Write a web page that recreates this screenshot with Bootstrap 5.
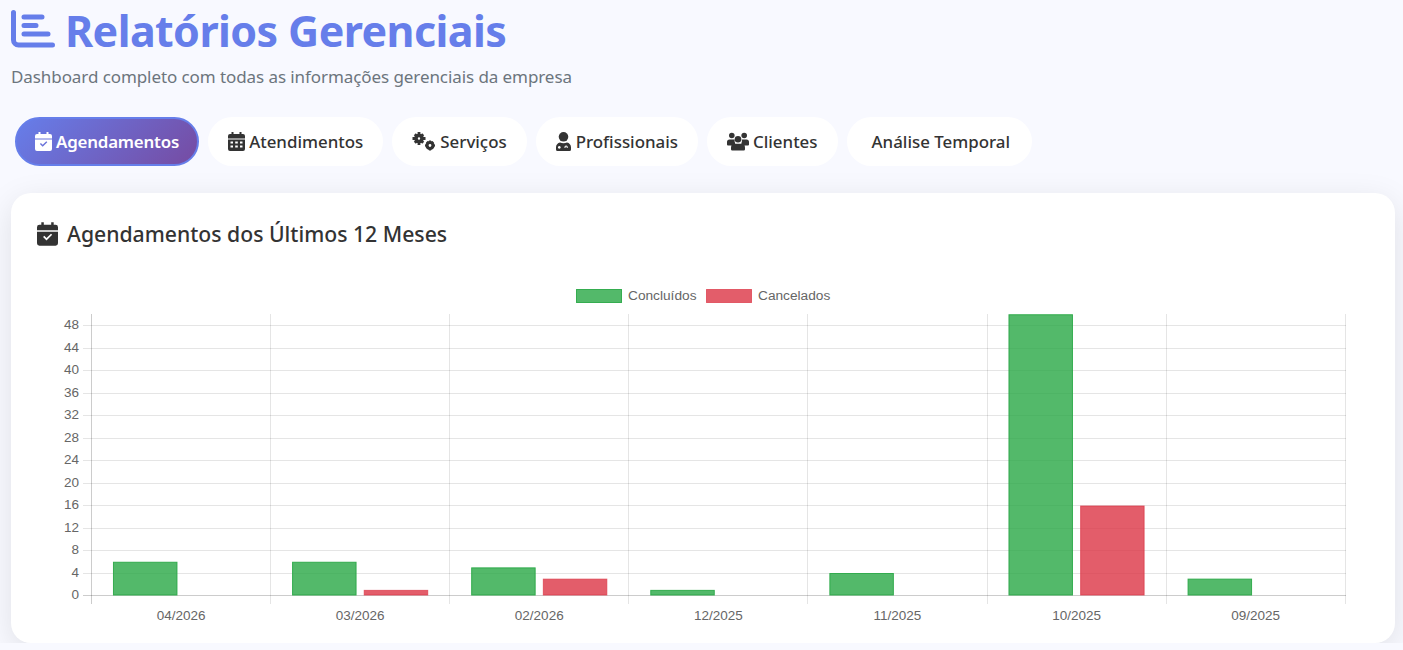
<!DOCTYPE html>
<html lang="pt-BR">
<head>
    <meta charset="UTF-8">
    <meta name="viewport" content="width=device-width, initial-scale=1.0">
    <title>Relatórios Gerenciais</title>
    <link href="https://cdn.jsdelivr.net/npm/bootstrap@5.3.0/dist/css/bootstrap.min.css" rel="stylesheet">
    <style>
        body {
            background: #f8f9ff;
            font-family: "Noto Sans", "Open Sans", sans-serif;
            color: #333;
            overflow: hidden;
        }
        .page-wrap { padding: 0 8px 0 11px; }
        .page-title {
            font-size: 43px;
            font-weight: 700;
            color: #667eea;
            line-height: 54px;
            margin: 4px 0 0;
            letter-spacing: -0.6px;
        }
        .page-title svg { width: 45px; height: 40px; margin-right: 9px; vertical-align: -3px; }
        .page-sub { font-size: 17px; color: #6c757d; line-height: 24px; margin: 7px 0 0; letter-spacing: -0.08px; }
        .report-tabs { margin: 28px 0 27px 4px; gap: 9px; }
        .report-tabs .nav-link {
            display: flex;
            align-items: center;
            height: 49px;
            padding: 0 18px;
            border: 2px solid transparent;
            border-radius: 25px;
            background: #fff;
            color: #333;
            font-size: 16.9px;
            font-weight: 500;
        }
        .report-tabs .nav-link.active {
            background: linear-gradient(135deg, #667eea 0%, #764ba2 100%);
            border-color: #667eea;
            color: #fff;
            font-weight: 600;
            letter-spacing: -0.2px;
        }
        .report-tabs svg { height: 19px; margin-right: 4px; fill: currentColor; }
        .report-tabs .tab-prof svg { margin-right: 5px; }
        .report-tabs .tab-plain { padding: 0 20px 0 23px; }
        .report-card {
            border: 0;
            border-radius: 20px;
            box-shadow: 0 8px 32px rgba(0, 0, 0, .1);
            height: 450px;
        }
        .report-card .card-body { padding: 26px 0 0 26px; }
        .report-card h2 { font-size: 21.2px; font-weight: 500; line-height: 30px; margin: 0 0 31px; color: #333; }
        .report-card h2 svg { height: 24px; width: 21px; margin-right: 9px; vertical-align: -4px; fill: currentColor; }
        #chart { display: block; }
        #chart text { font-family: "Liberation Sans", Arial, sans-serif; font-size: 13.5px; fill: #666; }
        #chart text.legend { font-size: 13.7px; }
    </style>
</head>

<body>
    <svg width="0" height="0" class="position-absolute">
        <symbol id="ic-cal-check" viewBox="0 0 17 19">
            <path fill-rule="evenodd" d="M3.5 0h2v2h6V0h2v2H15a2 2 0 0 1 2 2v2.4H0V4a2 2 0 0 1 2-2h1.500zM0 7.600h17V17a2 2 0 0 1-2 2H2a2 2 0 0 1-2-2zM12.300 10.200l-1-1-3.600 3.600-1.800-1.800-1 1 2.800 2.800z"/>
        </symbol>
        <symbol id="ic-cal-grid" viewBox="0 0 17 19">
            <path fill-rule="evenodd" d="M3.500 0h2v2h6V0h2v2H15a2 2 0 0 1 2 2v2.400H0V4a2 2 0 0 1 2-2h1.500zM0 7.600h17V17a2 2 0 0 1-2 2H2a2 2 0 0 1-2-2zM2.500 9.500v2h2.500v-2zM7.200 9.500v2h2.600v-2zM12 9.500v2h2.500v-2zM2.500 13.500v2h2.500v-2zM7.200 13.500v2h2.600v-2zM12 13.500v2h2.500v-2z"/>
        </symbol>
        <symbol id="ic-cogs" viewBox="0 0 24 19">
            <circle cx="7" cy="6.500" r="3" fill="none" stroke="currentColor" stroke-width="3.600"/>
            <path d="M5.600 0h2.800v3H5.600zM5.600 10h2.800v3H5.600zM.5 5.100h3v2.800h-3zM10.500 5.100h3v2.800h-3zM1.800 3.200l2-2 2 2-2 2zM8.200 9.800l2-2 2 2-2 2zM1.800 9.800l2-2 2 2-2 2zM8.200 3.200l2-2 2 2-2 2z"/>
            <circle cx="18" cy="13.500" r="3" fill="none" stroke="currentColor" stroke-width="3.200"/>
            <path d="M16.900 8.500h2.200v2.500h-2.200zM16.900 16h2.200v2.500h-2.200zM13 12.400h2.500v2.200H13zM20.500 12.400H23v2.200h-2.500zM14 10.500l1.600-1.600 1.600 1.600-1.600 1.600zM18.800 15.300l1.600-1.600 1.600 1.600-1.600 1.600zM14 15.300l1.600-1.600 1.600 1.600-1.600 1.600zM18.800 10.500l1.600-1.600 1.600 1.600-1.600 1.600z"/>
        </symbol>
        <symbol id="ic-user-md" viewBox="0 0 15 19">
            <circle cx="7.500" cy="4.800" r="4.800"/>
            <path fill-rule="evenodd" d="M4 10.400c1 .5 2.200.8 3.500.8s2.500-.3 3.500-.8c2.300.4 4 2.400 4 4.800v2.300a1.500 1.500 0 0 1-1.500 1.500h-12A1.500 1.500 0 0 1 0 17.500v-2.300c0-2.400 1.700-4.400 4-4.800zM3.300 14a1.400 1.400 0 1 0 .01 0zM10 13.500a1.600 1.600 0 0 0-1.500 1.600v1h1v-1a.6.6 0 0 1 1.200 0v1h1v-1a1.600 1.600 0 0 0-1.700-1.600z"/>
        </symbol>
        <symbol id="ic-users" viewBox="0 0 22 18">
            <circle cx="4.800" cy="3" r="2.800"/>
            <circle cx="17.200" cy="3" r="2.800"/>
            <circle cx="11" cy="6.800" r="3.300"/>
            <path d="M2.500 7h4.100c.4 0 .8.100 1.100.3a5 5 0 0 0 .5 3.600A6 6 0 0 0 5.300 13H1a1 1 0 0 1-1-1V9.500A2.500 2.500 0 0 1 2.500 7zM15.400 7h4.100A2.500 2.500 0 0 1 22 9.500V12a1 1 0 0 1-1 1h-4.300a6 6 0 0 0-2.400-2.100 5 5 0 0 0 .5-3.600c.3-.2.700-.3 1.100-.3zM8 11.200h6a4 4 0 0 1 4 4v1.600a1.200 1.200 0 0 1-1.200 1.200H5.200A1.200 1.200 0 0 1 4 16.800v-1.600a4 4 0 0 1 4-4z"/>
        </symbol>
    </svg>

    <div class="page-wrap">
        <header>
            <h1 class="page-title">
                <svg viewBox="0 0 45 40"><g fill="none" stroke="currentColor" stroke-width="5" stroke-linecap="round" stroke-linejoin="round"><path d="M2.500 2.500V30a5 5 0 0 0 5 5H41.500"/><path d="M13 7h18M13 15.500h12M13 24h24"/></g></svg>Relatórios Gerenciais
            </h1>
            <p class="page-sub">Dashboard completo com todas as informações gerenciais da empresa</p>
        </header>

        <ul class="nav nav-pills report-tabs">
            <li class="nav-item"><a class="nav-link active" href="#"><svg width="17"><use href="#ic-cal-check"/></svg>Agendamentos</a></li>
            <li class="nav-item"><a class="nav-link" href="#"><svg width="17"><use href="#ic-cal-grid"/></svg>Atendimentos</a></li>
            <li class="nav-item"><a class="nav-link" href="#"><svg width="24"><use href="#ic-cogs"/></svg>Serviços</a></li>
            <li class="nav-item"><a class="nav-link tab-prof" href="#"><svg width="15"><use href="#ic-user-md"/></svg>Profissionais</a></li>
            <li class="nav-item"><a class="nav-link" href="#"><svg width="22"><use href="#ic-users"/></svg>Clientes</a></li>
            <li class="nav-item"><a class="nav-link tab-plain" href="#">Análise Temporal</a></li>
        </ul>

        <div class="card report-card">
            <div class="card-body">
                <h2><svg><use href="#ic-cal-check"/></svg>Agendamentos dos Últimos 12 Meses</h2>
                <!-- viewBox uses the page coordinates of the chart area -->
                <svg id="chart" width="1330" height="350" viewBox="37 280 1330 350"></svg>
            </div>
        </div>
    </div>

    <script>
        var labels = ['04/2026', '03/2026', '02/2026', '12/2025', '11/2025', '10/2025', '09/2025'];
        var done = [6, 6, 5, 1, 4, 50, 3];
        var canceled = [0, 1, 3, 0, 0, 16, 0];
        var left = 91.5, cat = 179.1, zero = 595.5, perUnit = 5.625, top_ = 314;
        var out = '';

        function line(x1, y1, x2, y2, color) {
            out += '<line x1="' + x1 + '" y1="' + y1 + '" x2="' + x2 + '" y2="' + y2 + '" stroke="' + color + '"/>';
        }
        function text(x, y, anchor, s, cls) {
            out += '<text x="' + x + '" y="' + y + '" text-anchor="' + anchor + '" class="' + (cls || '') + '">' + s + '</text>';
        }
        function bar(x, value, fill, border) {
            if (!value) return;
            var y = zero - value * perUnit, w = 64.49;
            out += '<rect x="' + (x + .5) + '" y="' + (y + .5) + '" width="' + (w - 1) + '" height="' + (value * perUnit - 1) + '" fill="' + fill + '" stroke="' + border + '"/>';
        }

        for (var v = 0; v <= 48; v += 4) {
            var y = Math.floor(zero - v * perUnit) + .5;
            line(83, y, 1346, y, v ? 'rgba(0,0,0,.1)' : 'rgba(0,0,0,.2)');
            text(79, y + 3.5, 'end', v);
        }
        for (var i = 0; i <= 7; i++) {
            var x = Math.floor(left + i * cat) + .5;
            line(x, top_, x, 604, i ? 'rgba(0,0,0,.1)' : 'rgba(0,0,0,.2)');
        }
        labels.forEach(function (label, n) {
            var c = left + cat * (n + .5);
            bar(c - 68.08, done[n], 'rgba(40,167,69,.8)', 'rgba(40,167,69,.9)');
            bar(c + 3.58, canceled[n], 'rgba(220,53,69,.8)', 'rgba(220,53,69,.7)');
            text(c, 620, 'middle', label);
        });

        // legend
        out += '<rect x="576.500" y="289.500" width="45" height="13" fill="rgba(40,167,69,.8)" stroke="rgba(40,167,69,.9)"/>';
        text(628, 300, 'start', 'Concluídos', 'legend');
        out += '<rect x="706.500" y="289.500" width="45" height="13" fill="rgba(220,53,69,.8)" stroke="rgba(220,53,69,.7)"/>';
        text(758, 300, 'start', 'Cancelados', 'legend');

        document.getElementById('chart').innerHTML = out;
    </script>
    <script src="https://cdn.jsdelivr.net/npm/bootstrap@5.3.0/dist/js/bootstrap.bundle.min.js"></script>
</body>

</html>
